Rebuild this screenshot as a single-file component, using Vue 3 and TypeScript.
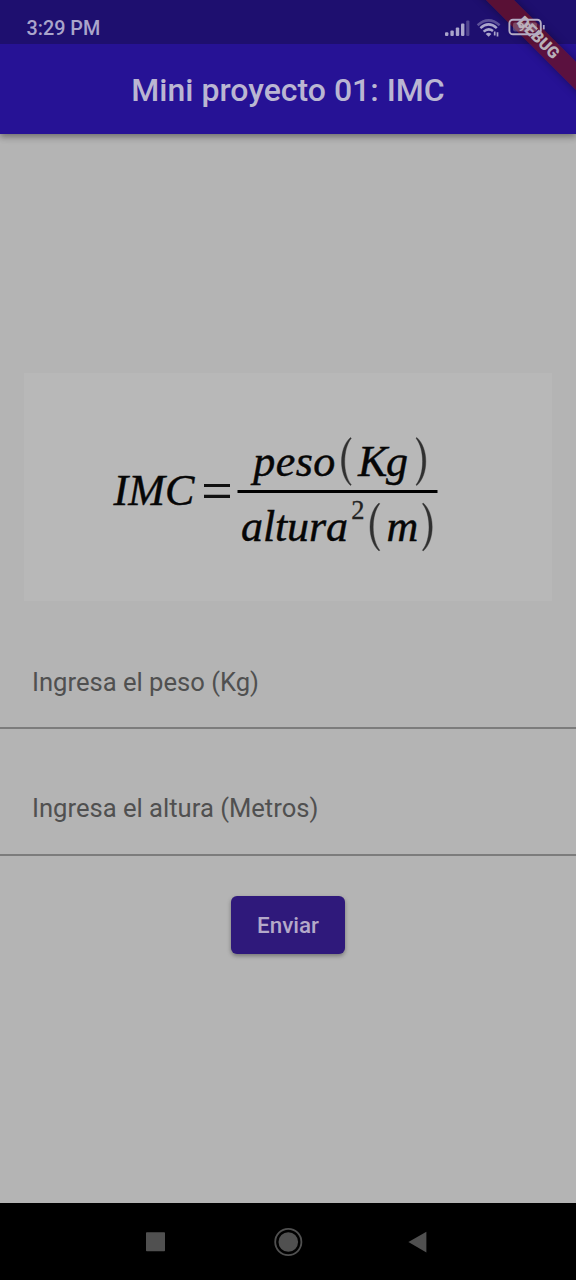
<script setup lang="ts">
import { ref } from 'vue'

interface Field {
  id: string
  label: string
}

const time = '3:29 PM'
const title = 'Mini proyecto 01: IMC'
const fields: Field[] = [
  { id: 'peso', label: 'Ingresa el peso (Kg)' },
  { id: 'altura', label: 'Ingresa el altura (Metros)' },
]
const values = ref<Record<string, string>>({ peso: '', altura: '' })
</script>

<template>
  <div class="screen">
    <header class="top">
      <div class="status">
        <span class="clock">{{ time }}</span>
        <svg class="indicators" width="104" height="24" viewBox="442 16 104 24">
          <g fill="#aaa5cb">
            <rect x="445" y="32.3" width="3.4" height="3.7" rx="1" />
            <rect x="450.4" y="30.4" width="3.4" height="5.6" rx="1" />
            <rect x="455.8" y="27.5" width="3.4" height="8.5" rx="1" />
            <rect x="461" y="23.6" width="3.4" height="12.4" rx="1" />
            <rect x="466.2" y="20.4" width="3.2" height="15.6" rx="1" opacity=".38" />
          </g>
          <g fill="none" stroke="#aaa5cb" stroke-width="2.5">
            <path d="M477.6 25.2Q488.6 15.6 499.6 25.2" opacity=".45" />
            <path d="M480.4 28.2Q488.6 20.6 496.8 28.2" />
            <path d="M483.6 31.6Q488.4 27.4 493 31" />
          </g>
          <path d="M485.7 34Q488.6 31.6 491.4 34L488.6 36.8Z" fill="#aaa5cb" />
          <path d="M494.7 31.4v4.2M497.5 32.2v4.2" stroke="#aaa5cb" stroke-width="1.7" />
          <rect x="509.4" y="19.7" width="31.4" height="14.6" rx="3.6" fill="none" stroke="#b5adc5" stroke-width="1.9" />
          <rect x="513" y="22.6" width="24" height="9" rx="2" fill="#b9a9b9" opacity=".36" />
          <path d="M543.8 25v4.4" stroke="#aaa5cb" stroke-width="1.8" />
          <text x="524.5" y="31.3" text-anchor="middle" font-size="11.5" font-weight="700" fill="#bdb3bd">99</text>
        </svg>
      </div>
      <h1 class="title">{{ title }}</h1>
      <div class="ribbon">DEBUG</div>
    </header>

    <main class="body">
      <figure class="formula">
        <svg width="528" height="228" viewBox="24 373 528 228">
          <g class="math" fill="#060606" stroke="#060606" stroke-width=".45">
            <text x="113.4" y="504.6" font-size="44" textLength="81">IMC</text>
            <text x="253.2" y="476" font-size="44" textLength="82">peso</text>
            <text x="358" y="476" font-size="44" textLength="50">Kg</text>
            <text x="241" y="541.4" font-size="44" textLength="107">altura</text>
            <text x="386.5" y="541.4" font-size="44" textLength="32">m</text>
          </g>
          <text class="math upright" x="351.2" y="518.6" font-size="26.5" fill="#222" stroke="#222" stroke-width=".3">2</text>
          <path d="M204 485.5H230M204 496.4H230" stroke="#111" stroke-width="3.2" />
          <path d="M237.5 491.5H437.5" stroke="#000" stroke-width="3.2" />
          <g fill="#303030" stroke="#303030" stroke-width=".4">
            <path d="M350.5 437.5C338.5 448 338.5 475 350.5 485.5L351.3 484.8C342.5 474 342.5 449 351.3 438.2Z" />
            <path d="M416.8 437.5C428.8 448 428.8 475 416.8 485.5L416 484.8C424.8 474 424.8 449 416 438.2Z" />
            <path d="M379 503C367 513.5 367 540.5 379 551L379.8 550.3C371 539.5 371 514.5 379.8 503.7Z" />
            <path d="M423.2 503C435.2 513.5 435.2 540.5 423.2 551L422.4 550.3C431.2 539.5 431.2 514.5 422.4 503.7Z" />
          </g>
        </svg>
      </figure>

      <form class="form" @submit.prevent>
        <input
          v-for="field in fields"
          :key="field.id"
          v-model="values[field.id]"
          class="field"
          type="text"
          :placeholder="field.label"
        />
        <button class="send" type="submit">Enviar</button>
      </form>
    </main>

    <nav class="nav">
      <svg width="576" height="77" viewBox="0 1203 576 77">
        <rect x="146" y="1232.3" width="19" height="19" rx=".8" fill="#505050" />
        <circle cx="288.3" cy="1242" r="13.1" fill="none" stroke="#505050" stroke-width="1.8" />
        <circle cx="288.3" cy="1242" r="9.8" fill="#505050" />
        <path d="M408.4 1242L426.4 1231.8V1252.4Z" fill="#505050" />
      </svg>
    </nav>
  </div>
</template>

<style>
body {
  margin: 0;
  background: #b4b4b4;
}
</style>

<style scoped>
.screen {
  display: flex;
  flex-direction: column;
  width: 576px;
  height: 1280px;
  overflow: hidden;
  background: #b4b4b4;
  font-family: Roboto, "Liberation Sans", sans-serif;
}
.top {
  position: relative;
  flex: none;
  height: 133.5px;
  background: #261295;
  box-shadow: 0 3px 6px rgba(0, 0, 0, 0.3), 0 1px 10px rgba(0, 0, 0, 0.12);
}
.status {
  display: flex;
  justify-content: space-between;
  box-sizing: border-box;
  height: 44px;
  padding: 16px 30px 0 26.5px;
  background: #1e0f6f;
}
.clock {
  font-size: 19.8px;
  font-weight: 500;
  line-height: 25px;
  color: #aaa5cb;
}
.indicators {
  position: relative;
  z-index: 1;
  display: block;
}
.title {
  margin: 0;
  font-size: 32px;
  font-weight: 500;
  line-height: 92px;
  text-align: center;
  color: #bab6d2;
  white-space: nowrap;
}
.ribbon {
  position: absolute;
  top: 28px;
  left: 448px;
  width: 180px;
  height: 20px;
  font-size: 16.3px;
  font-weight: 900;
  line-height: 20px;
  text-align: center;
  color: #b9b0b9;
  background: rgba(112, 17, 30, 0.72);
  box-shadow: 0 0 8px rgba(0, 0, 0, 0.35);
  transform: rotate(45deg);
  clip-path: inset(-12px 0);
}
.body {
  flex: 1;
  padding-top: 239.5px;
}
.formula {
  width: 528px;
  height: 228px;
  margin: 0 24px;
  background: #b8b8b8;
}
.formula svg {
  display: block;
}
.math {
  font-family: "Liberation Serif", serif;
  font-style: italic;
}
.upright {
  font-style: normal;
}
.form {
  display: flex;
  flex-direction: column;
  align-items: center;
  padding-top: 34px;
}
.field {
  box-sizing: border-box;
  width: 100%;
  height: 94px;
  margin: 0 0 32.5px;
  padding: 1px 32px 0;
  border: 0;
  border-bottom: 2px solid #7c7c7c;
  border-radius: 0;
  outline: 0;
  background: transparent;
  font: 400 25.6px/30px Roboto, "Liberation Sans", sans-serif;
  color: #222;
}
.field::placeholder {
  color: #505050;
  opacity: 1;
}
.send {
  width: 114px;
  height: 58px;
  margin-top: 8px;
  padding: 1px 0 0;
  border: 0;
  border-radius: 6px;
  background: #2f197b;
  box-shadow: 0 2px 4px rgba(0, 0, 0, 0.35);
  font: 500 22.4px/57px Roboto, "Liberation Sans", sans-serif;
  color: #b4a9c9;
}
.nav {
  flex: none;
  height: 77px;
  background: #000;
}
.nav svg {
  display: block;
}
</style>
